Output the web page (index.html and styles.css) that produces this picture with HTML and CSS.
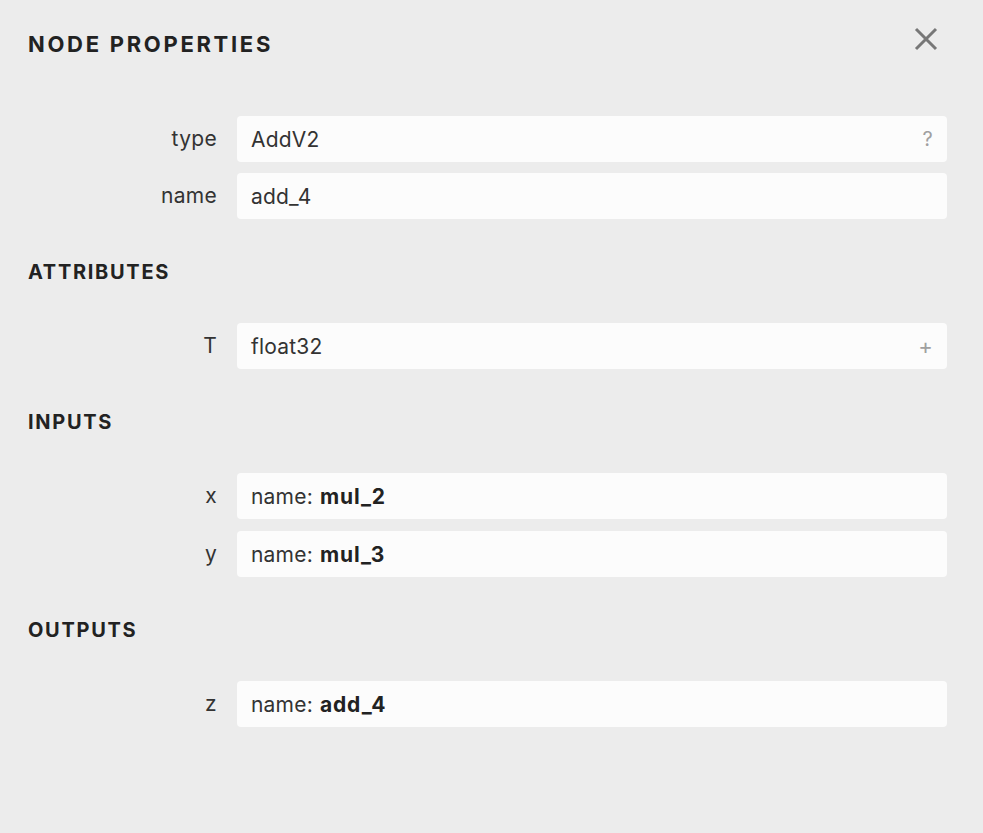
FILE: index.html
```html
<!DOCTYPE html>
<html>
<head>
<meta charset="utf-8">
<link rel="stylesheet" href="styles.css">
</head>
<body>
<div class="sidebar">
  <div class="header">
    <div class="title">NODE PROPERTIES</div>
    <button class="close" aria-label="Close">
      <svg width="24" height="24" viewBox="0 0 24 24"><path d="M2 2 L22 22 M22 2 L2 22" stroke="#777" stroke-width="3" fill="none" stroke-linecap="butt"/></svg>
    </button>
  </div>

  <div class="group first">
    <div class="row">
      <div class="label">type</div>
      <div class="value">AddV2<span class="action">?</span></div>
    </div>
    <div class="row">
      <div class="label">name</div>
      <div class="value">add_4</div>
    </div>
  </div>

  <div class="section">ATTRIBUTES</div>
  <div class="group">
    <div class="row">
      <div class="label">T</div>
      <div class="value">float32<span class="action plus">+</span></div>
    </div>
  </div>

  <div class="section">INPUTS</div>
  <div class="group wide">
    <div class="row">
      <div class="label">x</div>
      <div class="value">name: <b>mul_2</b></div>
    </div>
    <div class="row">
      <div class="label">y</div>
      <div class="value">name: <b>mul_3</b></div>
    </div>
  </div>

  <div class="section">OUTPUTS</div>
  <div class="group">
    <div class="row">
      <div class="label">z</div>
      <div class="value">name: <b>add_4</b></div>
    </div>
  </div>
</div>
</body>
</html>
```

FILE: styles.css
```css
html, body {
  margin: 0;
  padding: 0;
  background: #ececec;
}
body {
  font-family: Inter, "Noto Sans", "Liberation Sans", sans-serif;
  color: #333;
}
.sidebar {
  padding: 31px 36px 40px 28px;
}
.header {
  display: flex;
  justify-content: space-between;
  align-items: flex-start;
}
.title {
  font-size: 22px;
  line-height: 26px;
  font-weight: 700;
  letter-spacing: 2.7px;
  color: #222;
}
.close {
  border: none;
  background: none;
  padding: 0;
  margin: -4px 9px 0 0;
  width: 24px;
  height: 24px;
  cursor: pointer;
}
.close svg {
  display: block;
}
.group {
  display: flex;
  flex-direction: column;
  gap: 11px;
  margin-top: 39px;
}
.group.wide {
  gap: 12px;
}
.group.first {
  margin-top: 59px;
}
.row {
  display: grid;
  grid-template-columns: 189px 1fr;
  column-gap: 20px;
  align-items: center;
}
.label {
  text-align: right;
  font-size: 21px;
  line-height: 24px;
  letter-spacing: 0.3px;
  color: #333;
}
.value {
  position: relative;
  background: #fcfcfc;
  border-radius: 4px;
  height: 46px;
  display: flex;
  align-items: center;
  padding: 0 14px;
  font-size: 21px;
  letter-spacing: 0.2px;
  color: #333;
}
.value b {
  font-weight: 700;
  margin-left: 7px;
  letter-spacing: 0.9px;
  color: #222;
}
.action {
  position: absolute;
  right: 14px;
  top: 50%;
  transform: translateY(-50%);
  color: #a0a0a0;
  font-size: 20px;
}
.action.plus {
  font-size: 22px;
}
.section {
  margin-top: 41px;
  font-size: 20px;
  line-height: 24px;
  font-weight: 700;
  letter-spacing: 1.7px;
  color: #222;
}
```
